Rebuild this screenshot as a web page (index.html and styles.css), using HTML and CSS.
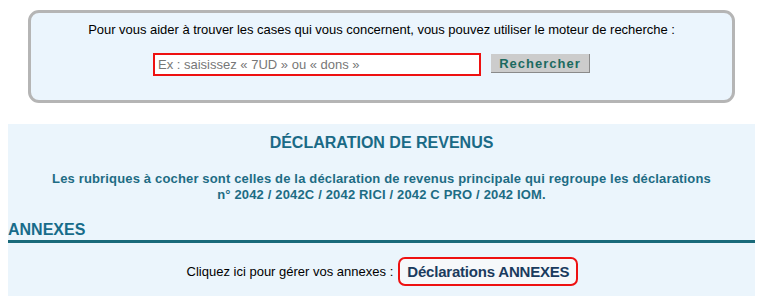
FILE: index.html
```html
<!DOCTYPE html>
<html lang="fr">
<head>
<meta charset="utf-8">
<title>Recherche</title>
<link rel="stylesheet" href="styles.css">
</head>
<body>
<div class="search-box">
  <p class="search-intro">Pour vous aider à trouver les cases qui vous concernent, vous pouvez utiliser le moteur de recherche :</p>
  <form class="search-form" onsubmit="return false;">
    <input class="search-input" type="text" placeholder="Ex : saisissez « 7UD » ou « dons »">
    <button class="search-btn" type="submit">Rechercher</button>
  </form>
</div>
<div class="section">
  <h1 class="section-title">DÉCLARATION DE REVENUS</h1>
  <p class="section-text">Les rubriques à cocher sont celles de la déclaration de revenus principale qui regroupe les déclarations<br>n° 2042 / 2042C / 2042 RICI / 2042 C PRO / 2042 IOM.</p>
  <h2 class="annex-title">ANNEXES</h2>
  <div class="annex-row">
    <span class="annex-label">Cliquez ici pour gérer vos annexes :</span>
    <a class="annex-link" href="#">Déclarations ANNEXES</a>
  </div>
</div>
</body>
</html>
```
FILE: styles.css
```css
html, body {
  margin: 0;
  padding: 0;
  background: #ffffff;
}
body {
  margin: 8px 8px 0 8px;
  font-family: "Liberation Sans", Arial, sans-serif;
  font-size: 13px;
  color: #000;
}
.search-box {
  margin: 2px 20px 0 20px;
  border: 3px solid #b5b5b5;
  border-radius: 11px;
  background: #ebf5fd;
  padding: 9px 0 24px 0;
  text-align: center;
}
.search-intro {
  margin: 0;
  line-height: 16px;
  letter-spacing: -0.03px;
}
.search-form {
  margin: 15px 0 0 0;
  display: flex;
  justify-content: center;
  align-items: flex-start;
  gap: 10px;
  padding-right: 20px;
}
.search-input {
  box-sizing: border-box;
  width: 328px;
  height: 23px;
  margin: 0;
  border: 2px solid #ee1111;
  padding: 0 3px;
  font-family: "Liberation Sans", Arial, sans-serif;
  font-size: 13px;
  background: #fff;
}
.search-input::placeholder {
  color: #777;
}
.search-btn {
  box-sizing: border-box;
  width: 99px;
  height: 19px;
  margin-top: 1px;
  padding: 0;
  border: none;
  border-right: 1px solid #8a8a8a;
  border-bottom: 1px solid #8a8a8a;
  background: #cccccc;
  color: #1b6a60;
  font-family: "Liberation Sans", Arial, sans-serif;
  font-size: 13px;
  font-weight: bold;
  letter-spacing: 1px;
  line-height: 17px;
}
.section {
  margin-top: 21px;
  background: #ebf5fc;
  padding: 9px 0 14px 0;
  min-height: 160px;
}
.section-title {
  margin: 0;
  text-align: center;
  font-size: 16px;
  line-height: 20px;
  font-weight: bold;
  color: #1a6a86;
}
.section-text {
  margin: 18px 0 0 0;
  text-align: center;
  font-size: 13px;
  line-height: 16px;
  font-weight: bold;
  letter-spacing: 0.16px;
  color: #1d6c84;
}
.annex-title {
  margin: 17px 0 0 0;
  font-size: 16px;
  line-height: 20px;
  font-weight: bold;
  color: #176c8a;
  border-bottom: 3px solid #196a7a;
}
.annex-row {
  margin-top: 14px;
  display: flex;
  justify-content: center;
  align-items: center;
  gap: 5px;
  padding-left: 2px;
}
.annex-label {
  line-height: 16px;
}
.annex-link {
  box-sizing: border-box;
  display: inline-block;
  height: 29px;
  padding: 0 7px;
  border: 2px solid #ee1111;
  border-radius: 7px;
  background: #f6f8fa;
  color: #1b3b5e;
  font-size: 15px;
  font-weight: bold;
  letter-spacing: -0.2px;
  line-height: 25px;
  text-decoration: none;
}
```
